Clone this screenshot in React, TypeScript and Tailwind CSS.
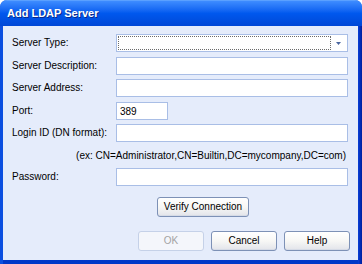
import React from 'react';

const font = { fontFamily: '"Liberation Sans", Arial, sans-serif' };

interface FieldRowProps {
  label: string;
  value?: string;
  narrow?: boolean;
  className?: string;
}

const FieldRow: React.FC<FieldRowProps> = ({ label, value, narrow, className }) => (
  <div className={`flex items-center h-[18px] ${className ?? ''}`}>
    <span className="w-[104px] text-[10px] text-black leading-none">{label}</span>
    <div
      className={`h-[18px] ${narrow ? 'w-[52px]' : 'flex-1'} bg-white border border-[#a9bee6] flex items-center px-[3px] text-[10px] text-black`}
    >
      {value}
    </div>
  </div>
);

const XpButton: React.FC<{ label: string; disabled?: boolean; className?: string }> = ({
  label,
  disabled,
  className,
}) => (
  <button
    className={`h-[20px] rounded-[3px] border text-[10px] leading-none flex items-center justify-center ${
      disabled
        ? 'border-[#c5d1e8] bg-[#f4f6fb] text-[#a3a3a3]'
        : 'border-[#7d91b6] bg-gradient-to-b from-white via-[#f7f7f5] to-[#e2e4ea] text-black shadow-[inset_0_-1px_0_#d6dbe6]'
    } ${className ?? ''}`}
  >
    {label}
  </button>
);

export default function App() {
  return (
    <div className="w-[362px] h-[264px] bg-white" style={font}>
      <div className="w-[362px] h-[264px] flex flex-col rounded-t-[7px] overflow-hidden bg-[#0a4fe0]">
        {/* title bar */}
        <div className="h-[26px] shrink-0 flex items-center pl-[7px] bg-gradient-to-b from-[#3e8cff] via-[#0058ee] to-[#0047d6] border-t border-[#5aa0ff]">
          <span className="text-white text-[11px] font-bold [text-shadow:1px_1px_0_#0a2a8c]">
            Add LDAP Server
          </span>
        </div>

        <div className="flex-1 flex bg-gradient-to-b from-[#0a50e2] to-[#0038c8]">
          <div className="w-[3px] bg-[#0b4fe0]" />
          <div className="flex-1 flex flex-col bg-[#e5ecfb] pl-[9px] pr-[10px] pt-[8px] mb-[4px]">
            {/* server type combo */}
            <div className="flex items-center h-[18px]">
              <span className="w-[104px] text-[10px] text-black leading-none">Server Type:</span>
              <div className="flex-1 h-[18px] bg-white border border-[#a9bee6] flex items-center p-[1px]">
                <div className="flex-1 h-full border border-dotted border-[#6b6b6b]" />
                <div className="w-[15px] h-full flex items-center justify-center">
                  <svg width="5" height="3" viewBox="0 0 5 3">
                    <path d="M0 0h5L2.5 3z" fill="#4a66a0" />
                  </svg>
                </div>
              </div>
            </div>

            <FieldRow label="Server Description:" className="mt-[5px]" />
            <FieldRow label="Server Address:" className="mt-[4px]" />
            <FieldRow label="Port:" value="389" narrow className="mt-[5px]" />
            <FieldRow label="Login ID (DN format):" className="mt-[4px]" />

            <div className="mt-[8px] h-[12px] flex items-center justify-end pr-[2px] text-[10px] text-black leading-none">
              (ex: CN=Administrator,CN=Builtin,DC=mycompany,DC=com)
            </div>

            <FieldRow label="Password:" className="mt-[6px]" />

            <div className="mt-[11px] flex pl-[145px]">
              <XpButton label="Verify Connection" className="w-[92px]" />
            </div>

            <div className="mt-[14px] flex justify-end gap-[7px] -mr-[2px]">
              <XpButton label="OK" disabled className="w-[66px]" />
              <XpButton label="Cancel" className="w-[66px]" />
              <XpButton label="Help" className="w-[66px]" />
            </div>
          </div>
          <div className="w-[4px] bg-gradient-to-r from-[#0a3fd8] to-[#001e9c]" />
        </div>
      </div>
    </div>
  );
}
